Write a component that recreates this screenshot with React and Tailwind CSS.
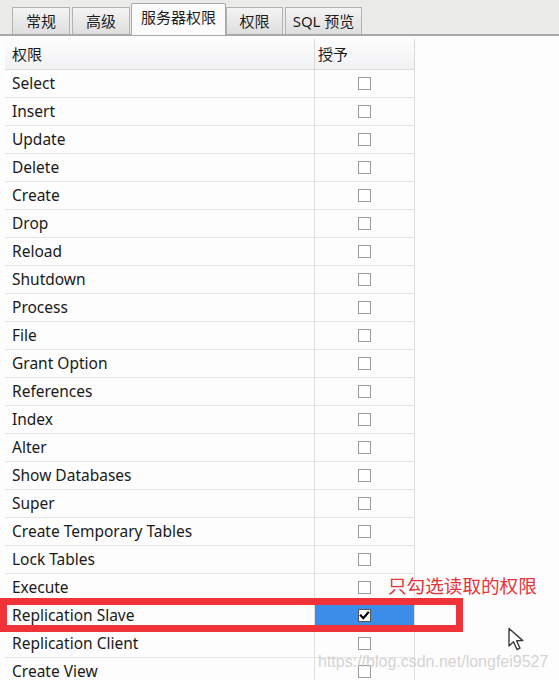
import React from "react";

const rows = [
  "Select", "Insert", "Update", "Delete", "Create", "Drop", "Reload", "Shutdown",
  "Process", "File", "Grant Option", "References", "Index", "Alter", "Show Databases",
  "Super", "Create Temporary Tables", "Lock Tables", "Execute", "Replication Slave",
  "Replication Client", "Create View",
];

function Tab({ label, w, selected }) {
  if (selected) {
    return (
      <div
        className={`${w} h-[32px] -mb-[1px] relative z-10 flex items-center justify-center bg-[#fbfbfb] border border-b-0 border-[#a8a8a8] rounded-t-[2px] text-[15px] text-[#1c1c1c] pb-[4px]`}
      >
        {label}
      </div>
    );
  }
  return (
    <div
      className={`${w} h-[27px] flex items-center justify-center bg-gradient-to-b from-[#f4f4f4] to-[#dedede] border border-b-0 border-[#b2b2b2] text-[15px] text-[#1c1c1c]`}
    >
      {label}
    </div>
  );
}

function Box({ checked }) {
  if (checked) {
    return (
      <div className="w-[13px] h-[13px] bg-white border border-[#555] flex items-center justify-center">
        <svg width="11" height="11" viewBox="0 0 11 11">
          <path d="M1.8 5.6 L4.3 8.2 L9.2 2.6" fill="none" stroke="#000" strokeWidth="2.2" strokeLinecap="square" />
        </svg>
      </div>
    );
  }
  return <div className="w-[13px] h-[13px] bg-white border border-[#9c9c9c]" />;
}

export default function App() {
  return (
    <div
      className="relative w-[559px] h-[680px] overflow-hidden bg-[#fdfdfd]"
      style={{ fontFamily: '"Noto Sans", "Noto Sans CJK SC", sans-serif' }}
    >
      {/* tab bar */}
      <div className="h-[36px] bg-[#ebebe9] border-b-[2px] border-[#a9a9a9] flex items-end pl-[12px]">
        <Tab label="常规" w="w-[58px]" />
        <div className="w-[2px]" />
        <Tab label="高级" w="w-[58px]" />
        <div className="w-[1px]" />
        <Tab label="服务器权限" w="w-[95px]" selected />
        <Tab label="权限" w="w-[57px]" />
        <div className="w-[2px]" />
        <Tab label="SQL 预览" w="w-[77px]" />
      </div>

      {/* table */}
      <div className="ml-[5px] w-[410px] pt-[3px] text-[15.5px] text-[#1a1a1a]">
        <div className="flex h-[31px] text-[15px] bg-gradient-to-b from-[#fdfdfd] to-[#f1f2f4] border-b border-[#dcdcdc]">
          <div className="w-[309px] pl-[7px] flex items-center">权限</div>
          <div className="flex-1 pl-[3px] flex items-center border-l border-r border-[#d8d8d8]">授予</div>
        </div>
        {rows.map((r) => {
          const sel = r === "Replication Slave";
          return (
            <div key={r} className="flex h-[28px] border-b border-[#e4e4e4]">
              <div className="w-[309px] pl-[7px] flex items-center">{r}</div>
              <div
                className={`flex-1 flex items-center justify-center border-l border-r border-[#dedede] ${
                  sel ? "bg-[#3b8de9]" : ""
                }`}
              >
                <Box checked={sel} />
              </div>
            </div>
          );
        })}
      </div>

      {/* red highlight box */}
      <div className="absolute left-0 top-[598px] w-[463px] h-[34px] border-[7px] border-[#ef3339]" />

      {/* annotation */}
      <div
        className="absolute left-[388px] top-[573px] text-[18.6px] leading-[24px] text-[#e8333a] whitespace-nowrap"
        style={{ fontFamily: '"Noto Sans CJK SC", sans-serif' }}
      >
        只勾选读取的权限
      </div>

      {/* watermark */}
      <div
        className="absolute left-[318px] top-[651px] text-[16px] leading-[22px] text-[#c8c8c8]/80 whitespace-nowrap"
        style={{ fontFamily: '"Liberation Sans", Arial, sans-serif' }}
      >
        https://blog.csdn.net/longfei9527
      </div>

      {/* cursor */}
      <svg className="absolute left-[507px] top-[627px]" width="22" height="26" viewBox="0 0 22 26">
        <path
          d="M2 1.5 L2 19 L6.5 14.8 L10 22.5 L13 21.2 L9.6 13.8 L15.8 13.6 Z"
          fill="#ffffff"
          stroke="#3a3a3a"
          strokeWidth="1.4"
          strokeLinejoin="round"
        />
      </svg>
    </div>
  );
}
